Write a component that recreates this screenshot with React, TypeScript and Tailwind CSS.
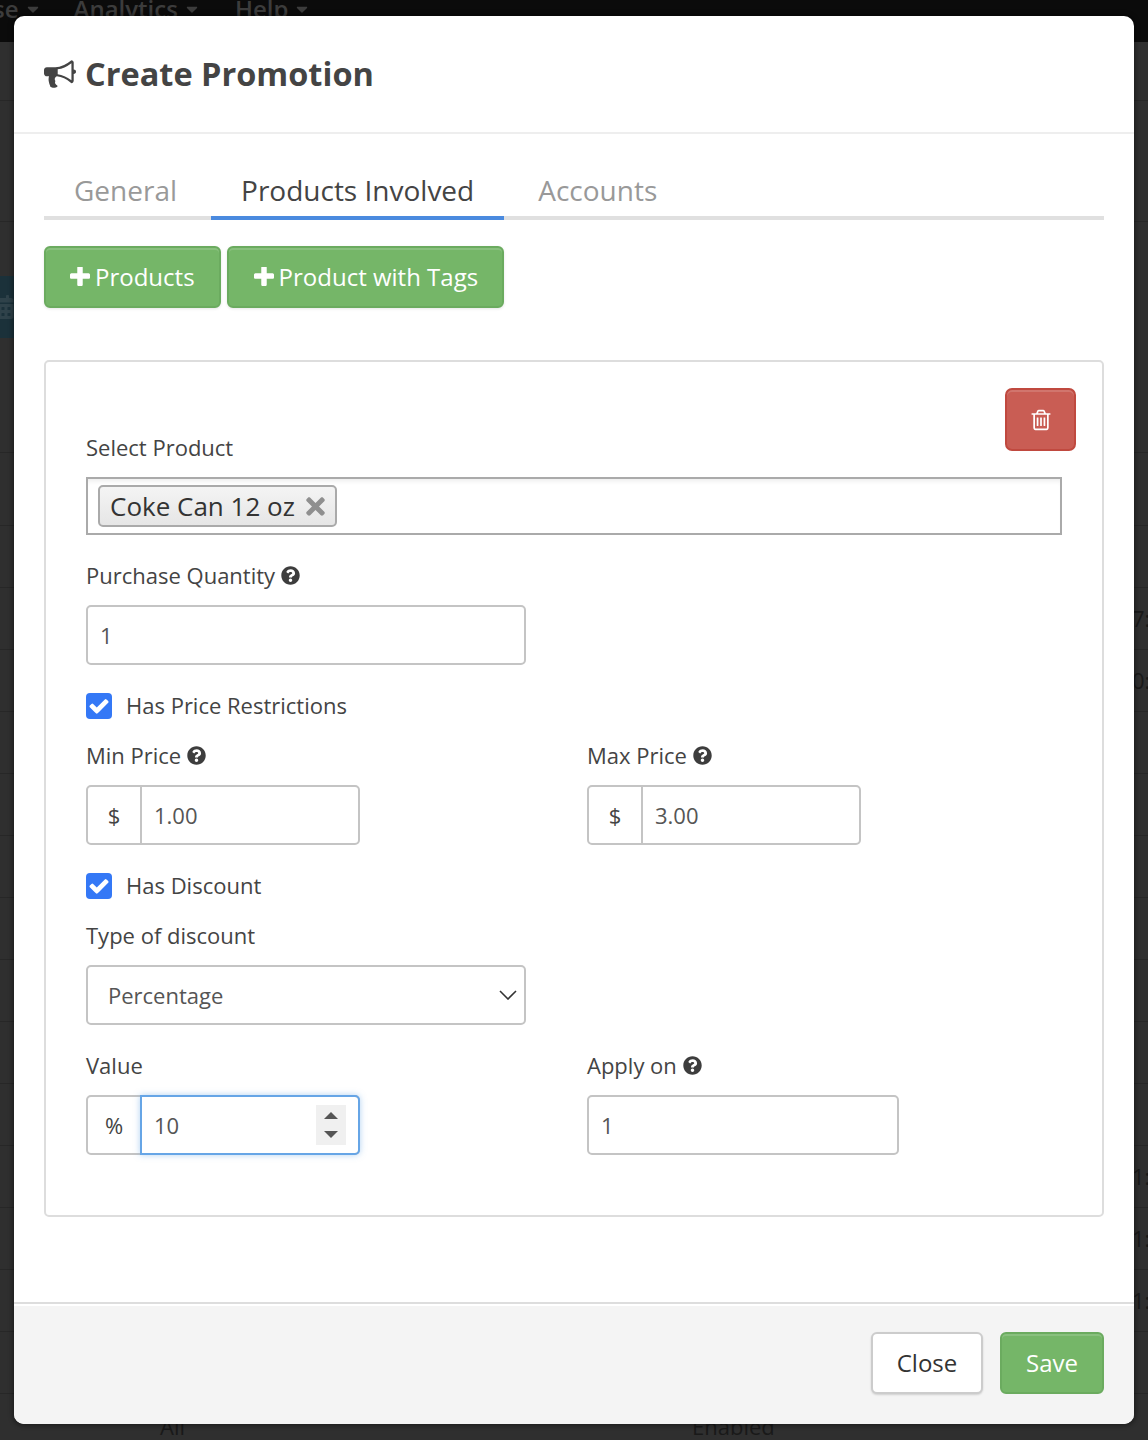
import type { ReactNode } from "react";
import { FaCalendarAlt, FaCaretDown, FaQuestionCircle, FaTimes } from "react-icons/fa";

const BULLHORN =
  "M1664 640q53 0 90.5 37.5t37.5 90.5-37.5 90.5-90.5 37.5v384q0 52-38 90t-90 38q-417-347-812-380-58 19-91 66t-31 100.5 40 92.5q-20 33-23 65.5t6 58 33.5 55 48 50 61.5 50.5q-29 58-111.5 83t-168.5 11.5-132-55.5q-7-23-29.5-87.5t-32-94.5-23-89-15-101 3.5-98.5 22-110.5h-122q-66 0-113-47t-47-113v-192q0-66 47-113t113-47h480q435 0 896-384 52 0 90 38t38 90v384zm-128 604v-954q-394 302-768 343v270q377 42 768 341z";
const TRASH =
  "M704 736v576q0 14-9 23t-23 9h-64q-14 0-23-9t-9-23v-576q0-14 9-23t23-9h64q14 0 23 9t9 23zm256 0v576q0 14-9 23t-23 9h-64q-14 0-23-9t-9-23v-576q0-14 9-23t23-9h64q14 0 23 9t9 23zm256 0v576q0 14-9 23t-23 9h-64q-14 0-23-9t-9-23v-576q0-14 9-23t23-9h64q14 0 23 9t9 23zm128 724v-948h-896v948q0 22 7 40.5t14.5 27 10.5 8.5h832q3 0 10.5-8.5t14.5-27 7-40.5zm-672-1076h448l-48-117q-7-9-17-11h-317q-10 2-17 11zm928 32v64q0 14-9 23t-23 9h-96v948q0 83-47 143.5t-113 60.5h-832q-66 0-113-58.5t-47-141.5v-952h-96q-14 0-23-9t-9-23v-64q0-14 9-23t23-9h309l70-167q15-37 54-63t79-26h320q40 0 79 26t54 63l70 167h309q14 0 23 9t9 23z";
const PLUS =
  "M1600 736v192q0 40-28 68t-68 28h-416v416q0 40-28 68t-68 28h-192q-40 0-68-28t-28-68v-416h-416q-40 0-68-28t-28-68v-192q0-40 28-68t68-28h416v-416q0-40 28-68t68-28h192q40 0 68 28t28 68v416h416q40 0 68 28t28 68z";
const CHECK =
  "M1671 566q0 40-28 68l-724 724-136 136q-28 28-68 28t-68-28l-136-136-362-362q-28-28-28-68t28-68l136-136q28-28 68-28t68 28l294 295 656-657q28-28 68-28t68 28l136 136q28 28 28 68z";

function Backdrop() {
  const rowLine = "border-b border-[#272727]";
  return (
    <div className="text-[22px] text-[#191919]">
      <div className="flex h-[42px] items-start overflow-hidden bg-[#0b0b0b] text-[24px] font-semibold text-[#3c3c3c]">
        <div className="-ml-[7px] -mt-[9px] flex items-center gap-[5px]">
          <span>se</span>
          <FaCaretDown className="text-[18px]" />
        </div>
        <div className="-mt-[9px] ml-[32px] flex items-center gap-[5px]">
          <span>Analytics</span>
          <FaCaretDown className="text-[18px]" />
        </div>
        <div className="-mt-[9px] ml-[34px] flex items-center gap-[5px]">
          <span>Help</span>
          <FaCaretDown className="text-[18px]" />
        </div>
      </div>
      <div className={`h-[59px] ${rowLine}`} />
      <div className={`h-[121px] ${rowLine}`} />
      <div className={`h-[231px] pt-[54px] ${rowLine}`}>
        <div className="flex h-[62px] w-[40px] items-center overflow-hidden bg-[#1b313a]">
          <FaCalendarAlt className="-ml-[9px] shrink-0 text-[24px] text-[#2f424a]" />
        </div>
      </div>
      <div className={`h-[73px] ${rowLine}`} />
      <div className={`h-[62px] ${rowLine}`} />
      <div className={`flex h-[62px] items-center pl-[1132px] ${rowLine}`}>7:</div>
      <div className={`flex h-[62px] items-center pl-[1132px] ${rowLine}`}>0:</div>
      {[0, 1, 2, 3, 4, 5, 6].map((i) => (
        <div key={i} className={`h-[62px] ${rowLine}`} />
      ))}
      <div className={`flex h-[62px] items-center pl-[1132px] ${rowLine}`}>1:</div>
      <div className={`flex h-[62px] items-center pl-[1132px] ${rowLine}`}>1:</div>
      <div className={`flex h-[62px] items-center pl-[1132px] ${rowLine}`}>1:</div>
      <div className={`h-[62px] ${rowLine}`} />
      <div className="flex pl-[160px] pt-[16px]">
        <span className="w-[532px]">All</span>
        <span>Enabled</span>
      </div>
    </div>
  );
}

function Help() {
  return <FaQuestionCircle className="ml-[6px] inline-block text-[19px] text-[#3d3d3d]" />;
}

function Label({ children, help }: { children: ReactNode; help?: boolean }) {
  return (
    <div className="flex h-[30px] items-center pb-[2px] text-[22px] text-[#444]">
      {children}
      {help && <Help />}
    </div>
  );
}

function TextBox({ value, width }: { value: string; width: string }) {
  return (
    <div className={`mt-[14px] flex h-[60px] items-center rounded-[5px] border-2 border-[#c4c4c4] pl-[12px] text-[22px] text-[#555] ${width}`}>
      {value}
    </div>
  );
}

function Addon({ symbol, value, width }: { symbol: string; value: string; width: string }) {
  return (
    <div className={`mt-[14px] flex h-[60px] rounded-[5px] border-2 border-[#c4c4c4] text-[22px] text-[#555] ${width}`}>
      <div className="flex w-[54px] items-center justify-center border-r-2 border-[#c4c4c4] text-[#444]">{symbol}</div>
      <div className="flex items-center pl-[12px]">{value}</div>
    </div>
  );
}

function Check({ label }: { label: string }) {
  return (
    <div className="flex h-[30px] items-center text-[22px] text-[#444]">
      <span className="flex h-[26px] w-[26px] items-center justify-center rounded-[4px] bg-[#3478f6]">
        <svg viewBox="0 0 1792 1792" className="h-[22px] w-[22px] fill-white">
          <path d={CHECK} />
        </svg>
      </span>
      <span className="ml-[14px] pb-[2px]">{label}</span>
    </div>
  );
}

function GreenButton({ label, padding }: { label: string; padding: string }) {
  return (
    <button className={`flex h-[62px] items-center rounded-[6px] border-2 border-[#6bab5f] bg-[#75b668] text-[24px] text-white shadow-[inset_0_2px_0_rgba(255,255,255,0.15),0_1px_3px_rgba(0,0,0,0.1)] ${padding}`}>
      <svg viewBox="192 192 1408 1408" className="mr-[5px] h-[20px] w-[20px] fill-white">
        <path d={PLUS} />
      </svg>
      {label}
    </button>
  );
}

export default function App() {
  return (
    <div className="relative h-[1440px] w-[1148px] overflow-hidden bg-[#2f2f2f] font-['Open_Sans',sans-serif]">
      <Backdrop />

      <div className="absolute left-[14px] top-[16px] flex h-[1408px] w-[1120px] flex-col rounded-[10px] bg-white shadow-[0_0_4px_2px_rgba(0,0,0,0.35)]">
        <div className="flex h-[118px] items-center border-b-2 border-[#eeeeee] px-[30px]">
          <svg viewBox="0 0 1792 1792" className="h-[32px] w-[32px] fill-[#444]">
            <path d={BULLHORN} />
          </svg>
          <h4 className="ml-[9px] text-[32.5px] font-bold text-[#444]">Create Promotion</h4>
        </div>

        <div className="flex-1 px-[30px] pt-[32px]">
          <div className="flex gap-[4px] border-b-4 border-[#e0e0e0] text-[28px]">
            <div className="-mb-[4px] flex h-[54px] items-center border-b-4 border-transparent px-[30px] pb-[2px] text-[#999]">General</div>
            <div className="-mb-[4px] flex h-[54px] items-center border-b-4 border-[#4a8adf] px-[30px] pb-[2px] text-[#444]">Products Involved</div>
            <div className="-mb-[4px] flex h-[54px] items-center border-b-4 border-transparent px-[30px] pb-[2px] text-[#999]">Accounts</div>
          </div>

          <div className="mt-[26px] flex gap-[6px]">
            <GreenButton label="Products" padding="px-[24px]" />
            <GreenButton label="Product with Tags" padding="pl-[25px] pr-[24px]" />
          </div>

          <div className="mt-[52px] rounded-[5px] border-2 border-[#dddddd] px-[40px] pb-[60px] pt-[26px]">
            <div className="flex h-[89px] items-start justify-between">
              <div className="mt-[45px]">
                <Label>Select Product</Label>
              </div>
              <button className="-mr-[14px] flex h-[63px] w-[71px] items-center justify-center rounded-[7px] border-2 border-[#c0493f] bg-[#c95d54] shadow-[inset_0_2px_0_rgba(255,255,255,0.15)]">
                <svg viewBox="0 0 1792 1792" className="h-[24px] w-[24px] fill-white">
                  <path d={TRASH} />
                </svg>
              </button>
            </div>

            <div className="flex h-[58px] items-center border-2 border-[#aaaaaa] pl-[10px] shadow-[inset_0_5px_5px_-3px_rgba(0,0,0,0.08)]">
              <div className="flex h-[42px] items-center rounded-[5px] border-2 border-[#aaaaaa] bg-gradient-to-b from-[#f4f4f4] to-[#e6e6e6] pl-[10px] pr-[6px] text-[26px] text-[#333]">
                Coke Can 12 oz
                <FaTimes className="ml-[7px] text-[27px] text-[#8f8f8f]" />
              </div>
            </div>

            <div className="mt-[26px]">
              <Label help>Purchase Quantity</Label>
              <TextBox value="1" width="w-[440px]" />
            </div>

            <div className="mt-[26px]">
              <Check label="Has Price Restrictions" />
            </div>

            <div className="mt-[20px] grid grid-cols-[501px_1fr]">
              <div>
                <Label help>Min Price</Label>
                <Addon symbol="$" value="1.00" width="w-[274px]" />
              </div>
              <div>
                <Label help>Max Price</Label>
                <Addon symbol="$" value="3.00" width="w-[274px]" />
              </div>
            </div>

            <div className="mt-[26px]">
              <Check label="Has Discount" />
            </div>

            <div className="mt-[20px]">
              <Label>Type of discount</Label>
              <div className="mt-[14px] flex h-[60px] w-[440px] items-center justify-between rounded-[5px] border-2 border-[#c4c4c4] pl-[20px] pr-[7px] text-[22px] text-[#555]">
                Percentage
                <svg viewBox="0 0 18 10" className="h-[10px] w-[18px] fill-none stroke-[#333] stroke-[1.6]">
                  <path d="M1 1l8 8 8-8" />
                </svg>
              </div>
            </div>

            <div className="mt-[26px] grid grid-cols-[501px_1fr]">
              <div>
                <Label>Value</Label>
                <div className="mt-[14px] flex h-[60px] w-[274px] rounded-[5px] border-2 border-[#c4c4c4] text-[22px] text-[#555]">
                  <div className="flex w-[52px] items-center justify-center text-[#444]">%</div>
                  <div className="-my-[2px] -mr-[2px] flex flex-1 items-center justify-between rounded-r-[5px] border-2 border-[#66a5e6] pl-[12px] pr-[12px] shadow-[0_0_6px_rgba(102,165,230,0.5)]">
                    10
                    <div className="flex h-[40px] w-[30px] flex-col items-center justify-center gap-[12px] bg-[#f0f0f0]">
                      <span className="h-0 w-0 border-x-[7px] border-b-[7px] border-x-transparent border-b-[#555]" />
                      <span className="h-0 w-0 border-x-[7px] border-t-[7px] border-x-transparent border-t-[#555]" />
                    </div>
                  </div>
                </div>
              </div>
              <div>
                <Label help>Apply on</Label>
                <TextBox value="1" width="w-[312px]" />
              </div>
            </div>
          </div>
        </div>

        <div className="flex h-[122px] items-start justify-end gap-[17px] rounded-b-[10px] border-t-2 border-[#dddddd] bg-[#f4f4f4] px-[30px] pt-[28px] shadow-[inset_0_2px_0_#ffffff]">
          <button className="h-[62px] w-[112px] rounded-[6px] border-2 border-[#cccccc] bg-white text-[24px] text-[#333] shadow-[0_1px_2px_rgba(0,0,0,0.15)]">Close</button>
          <button className="h-[62px] w-[104px] rounded-[6px] border-2 border-[#6bab5f] bg-[#75b668] text-[24px] text-white shadow-[inset_0_2px_0_rgba(255,255,255,0.15)]">Save</button>
        </div>
      </div>
    </div>
  );
}
